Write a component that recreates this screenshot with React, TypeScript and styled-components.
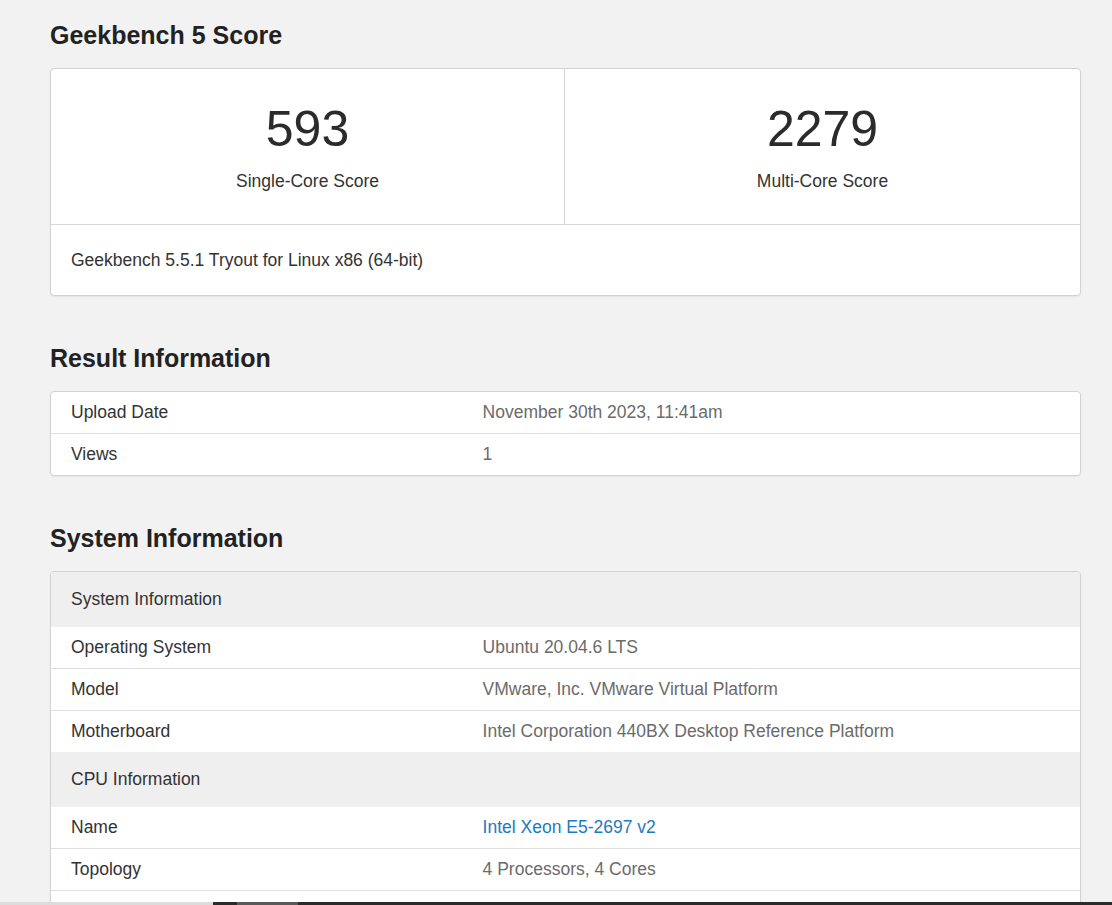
import React from 'react';
import styled, { createGlobalStyle } from 'styled-components';

const GlobalStyle = createGlobalStyle`
  html, body {
    margin: 0;
    padding: 0;
    background: #f2f2f2;
    font-family: "Liberation Sans", Arial, sans-serif;
    color: #333;
  }
`;

type InfoRow = { label: string; value: string; link?: boolean };
type InfoGroup = { title: string; rows: InfoRow[] };

const resultRows: InfoRow[] = [
  { label: 'Upload Date', value: 'November 30th 2023, 11:41am' },
  { label: 'Views', value: '1' },
];

const systemGroups: InfoGroup[] = [
  {
    title: 'System Information',
    rows: [
      { label: 'Operating System', value: 'Ubuntu 20.04.6 LTS' },
      { label: 'Model', value: 'VMware, Inc. VMware Virtual Platform' },
      { label: 'Motherboard', value: 'Intel Corporation 440BX Desktop Reference Platform' },
    ],
  },
  {
    title: 'CPU Information',
    rows: [
      { label: 'Name', value: 'Intel Xeon E5-2697 v2', link: true },
      { label: 'Topology', value: '4 Processors, 4 Cores' },
      { label: 'Identifier', value: 'GenuineIntel Family 6 Model 62 Stepping 4' },
    ],
  },
];

const Page = styled.main`
  width: 1031px;
  margin-left: 50px;
  padding: 20px 0 40px;
`;

const Heading = styled.h2`
  margin: 0 0 18px;
  font-size: 25px;
  line-height: 30px;
  font-weight: 700;
  color: #222;
`;

const Section = styled.section`
  & + & {
    margin-top: 47px;
  }
`;

const Card = styled.div`
  background: #fff;
  border: 1px solid #d2d2d2;
  border-radius: 4px;
  box-shadow: 0 1px 2px rgba(0, 0, 0, 0.06);
  overflow: hidden;
`;

const ScoreRow = styled.div`
  display: grid;
  grid-template-columns: 513px 1fr;
  border-bottom: 1px solid #d6d6d6;
`;

const ScoreCell = styled.div`
  display: flex;
  flex-direction: column;
  align-items: center;
  padding: 30px 0 31px;

  & + & {
    border-left: 1px solid #d6d6d6;
  }
`;

const ScoreValue = styled.div`
  font-size: 50px;
  line-height: 60px;
  color: #2b2b2b;
`;

const ScoreLabel = styled.div`
  margin-top: 10px;
  font-size: 17.5px;
  line-height: 24px;
  color: #333;
`;

const Footnote = styled.div`
  padding: 23px 20px 23px;
  font-size: 17.5px;
  line-height: 24px;
  color: #333;
`;

const GroupHeader = styled.div`
  padding: 15px 20px 16px;
  background: #efefef;
  font-size: 17.5px;
  line-height: 24px;
  color: #333;
`;

const Row = styled.div`
  display: grid;
  grid-template-columns: 40% 60%;
  font-size: 17.5px;
  line-height: 24px;

  & + & {
    border-top: 1px solid #dedede;
  }
`;

const Label = styled.div`
  padding: 8px 20px 9px;
  color: #333;
`;

const Value = styled.div<{ $link?: boolean }>`
  padding: 8px 20px 9px;
  color: ${p => (p.$link ? '#1c7ac0' : '#6b6b6b')};
`;

const BottomStrip = styled.div`
  position: fixed;
  left: 0;
  right: 0;
  bottom: 0;
  height: 3px;
  display: grid;
  grid-template-columns: 213px 24px 61px 1fr;
`;

const StripPart = styled.div<{ $tone: string }>`
  background: ${p => p.$tone};
`;

const Rows: React.FC<{ rows: InfoRow[] }> = ({ rows }) => (
  <>
    {rows.map(r => (
      <Row key={r.label}>
        <Label>{r.label}</Label>
        <Value $link={r.link}>{r.value}</Value>
      </Row>
    ))}
  </>
);

export default function App() {
  return (
    <>
      <GlobalStyle />
      <Page>
        <Section>
          <Heading>Geekbench 5 Score</Heading>
          <Card>
            <ScoreRow>
              <ScoreCell>
                <ScoreValue>593</ScoreValue>
                <ScoreLabel>Single-Core Score</ScoreLabel>
              </ScoreCell>
              <ScoreCell>
                <ScoreValue>2279</ScoreValue>
                <ScoreLabel>Multi-Core Score</ScoreLabel>
              </ScoreCell>
            </ScoreRow>
            <Footnote>Geekbench 5.5.1 Tryout for Linux x86 (64-bit)</Footnote>
          </Card>
        </Section>

        <Section>
          <Heading>Result Information</Heading>
          <Card>
            <Rows rows={resultRows} />
          </Card>
        </Section>

        <Section>
          <Heading>System Information</Heading>
          <Card>
            {systemGroups.map(g => (
              <React.Fragment key={g.title}>
                <GroupHeader>{g.title}</GroupHeader>
                <Rows rows={g.rows} />
              </React.Fragment>
            ))}
          </Card>
        </Section>
      </Page>
      <BottomStrip>
        <StripPart $tone="#dcdcdc" />
        <StripPart $tone="#2b2b2b" />
        <StripPart $tone="#5a5a5a" />
        <StripPart $tone="#2b2b2b" />
      </BottomStrip>
    </>
  );
}
